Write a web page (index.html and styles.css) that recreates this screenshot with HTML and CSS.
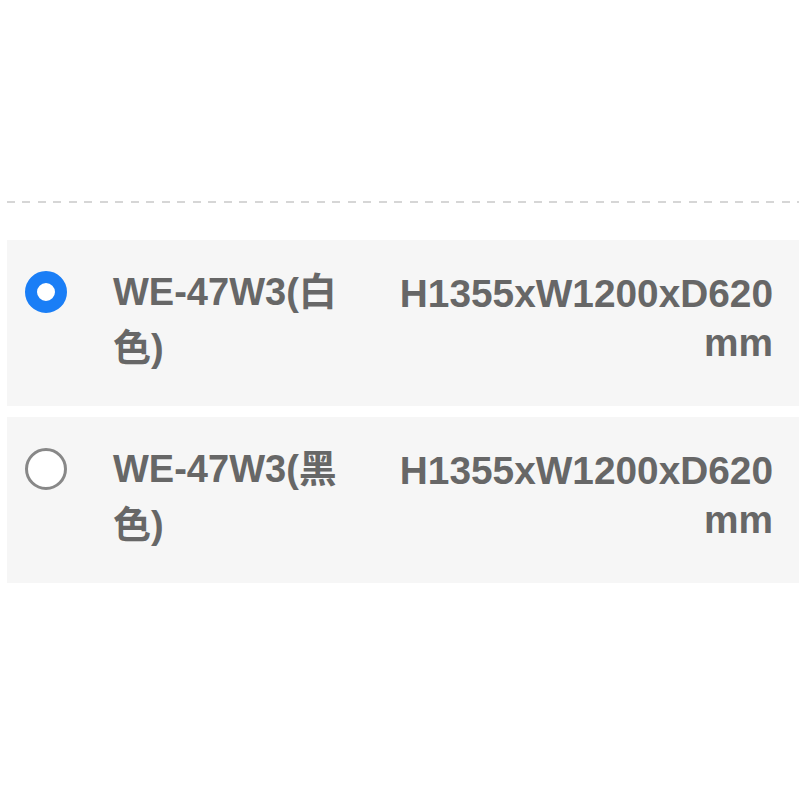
FILE: index.html
```html
<!DOCTYPE html>
<html lang="zh">
<head>
<meta charset="utf-8">
<title>Options</title>
<link rel="stylesheet" href="styles.css">
</head>
<body>
<div class="page">
  <div class="divider"></div>
  <div class="options">
    <div class="option">
      <span class="radio radio-on"></span>
      <div class="name">WE-47W3(白色)</div>
      <div class="spec">H1355xW1200xD620<br>mm</div>
    </div>
    <div class="option">
      <span class="radio radio-off"></span>
      <div class="name">WE-47W3(黑色)</div>
      <div class="spec">H1355xW1200xD620<br>mm</div>
    </div>
  </div>
</div>
</body>
</html>
```

FILE: styles.css
```css
html, body {
  margin: 0;
  padding: 0;
  background: #ffffff;
}

.page {
  padding: 201px 1px 0 7px;
  font-family: "Liberation Sans", Arial, "Noto Sans CJK SC", sans-serif;
  font-weight: bold;
  color: #676767;
}

.divider {
  height: 2px;
  background: repeating-linear-gradient(to right, #d6d6d6 0 8px, transparent 8px 15.5px);
}

.options {
  margin-top: 37px;
  display: flex;
  flex-direction: column;
  gap: 11px;
}

.option {
  display: flex;
  align-items: flex-start;
  background: #f6f6f6;
  padding: 24px 26px 30px 18px;
  height: 166px;
  box-sizing: border-box;
}

.radio {
  flex: none;
  width: 42px;
  height: 42px;
  border-radius: 50%;
  box-sizing: border-box;
  margin-top: 7px;
  background: #ffffff;
}

.radio-on {
  border: 12px solid #1a7ef6;
}

.radio-off {
  border: 3px solid #888888;
}

.name {
  flex: none;
  width: 240px;
  margin-left: 46px;
  font-size: 38px;
  line-height: 56px;
}

.spec {
  flex: 1;
  text-align: right;
  font-size: 38.8px;
  line-height: 49px;
  margin-top: 5px;
}
```
